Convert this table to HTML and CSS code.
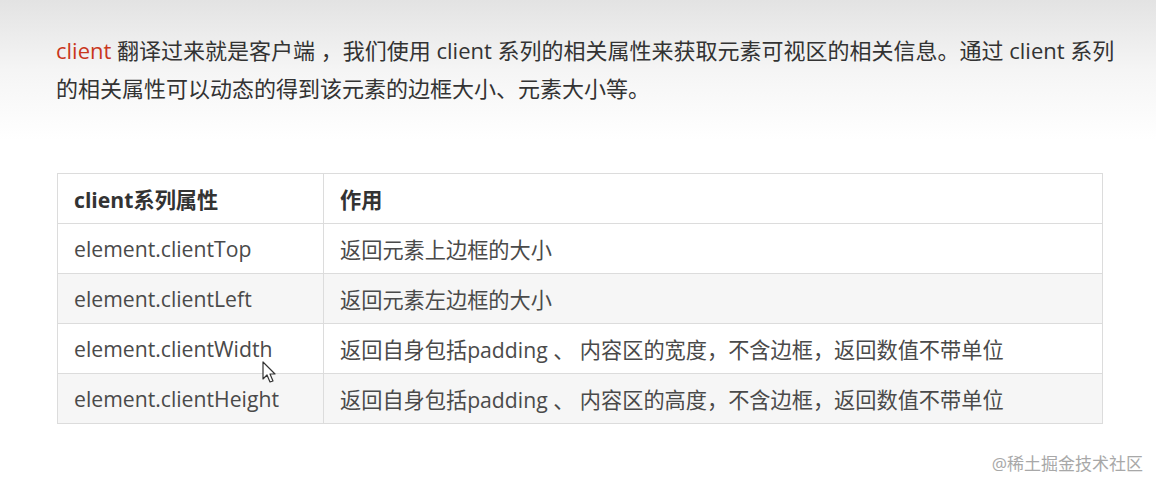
FILE: index.html
```html
<!DOCTYPE html>
<html>

<head>
    <meta charset="UTF-8">
    <title>client 系列</title>
    <!-- Styles  -->
    <link rel="stylesheet" href="styles.css">
</head>

<body>
    <div class="page">
        <p class="intro"><span class="hl">client</span> 翻译过来就是客户端 ，我们使用 client 系列的相关属性来获取元素可视区的相关信息。通过 client 系列的相关属性可以动态的得到该元素的边框大小、元素大小等。</p>

        <table class="props">
            <tr>
                <th class="col-name">client系列属性</th>
                <th>作用</th>
            </tr>
            <tr>
                <td>element.clientTop</td>
                <td>返回元素上边框的大小</td>
            </tr>
            <tr>
                <td>element.clientLeft</td>
                <td>返回元素左边框的大小</td>
            </tr>
            <tr>
                <td>element.clientWidth</td>
                <td>返回自身包括padding 、 内容区的宽度，不含边框，返回数值不带单位</td>
            </tr>
            <tr>
                <td>element.clientHeight</td>
                <td>返回自身包括padding 、 内容区的高度，不含边框，返回数值不带单位</td>
            </tr>
        </table>

        <!-- mouse pointer -->
        <svg class="cursor" width="16" height="24" viewBox="0 0 16 24">
            <path d="M1 1 L1 18 L5 14 L8 21 L11 20 L8 13 L13 13 Z" fill="#fff" stroke="#333" stroke-width="1.2" stroke-linejoin="round"/>
        </svg>

        <div class="mark">@稀土掘金技术社区</div>
    </div>
</body>

</html>
```

FILE: styles.css
```css
html,
body {
    margin: 0;
    height: 100%;
}

body {
    background: linear-gradient(to bottom, #e3e3e3 0px, #f5f5f5 70px, #ffffff 140px);
    font-family: "Open Sans", "Noto Sans CJK SC", sans-serif;
    color: #333;
    overflow: hidden;
}

.page {
    position: relative;
    height: 100%;
    padding: 31px 36px 0 56px;
    box-sizing: border-box;
}

.intro {
    margin: 0;
    font-size: 22px;
    line-height: 38px;
    color: #333;
}

.hl {
    color: #c9371c;
}

.props {
    margin-top: 66px;
    margin-left: 1px;
    width: 1046px;
    border-collapse: collapse;
    font-size: 21.2px;
    color: #4a4a4a;
}

.props th,
.props td {
    border: 1px solid #dcdcdc;
    text-align: left;
    padding: 0 16px;
    height: 49px;
    font-weight: normal;
}

.props th {
    font-weight: bold;
    color: #333;
    background: #fff;
}

.props .col-name {
    width: 233px;
}

.props tr:nth-child(odd) td {
    background: #f6f6f6;
}

.props tr:nth-child(even) td {
    background: #fff;
}

.cursor {
    position: absolute;
    left: 262px;
    top: 361px;
}

.mark {
    position: absolute;
    right: 13px;
    top: 450px;
    font-size: 17px;
    color: #a8a8a8;
}
```
